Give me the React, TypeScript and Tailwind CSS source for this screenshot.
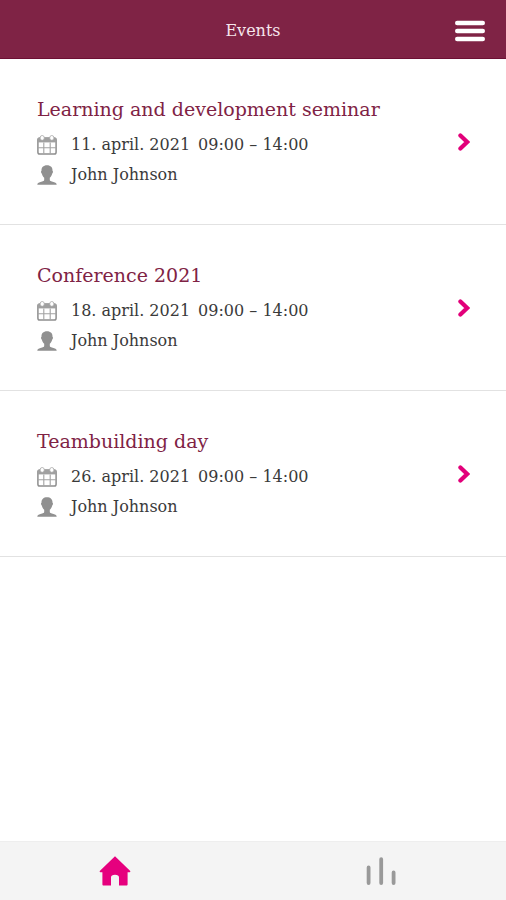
interface EventItem {
  title: string;
  date: string;
  time: string;
  host: string;
}

const events: EventItem[] = [
  {
    title: 'Learning and development seminar',
    date: '11. april. 2021',
    time: '09:00 – 14:00',
    host: 'John Johnson',
  },
  {
    title: 'Conference 2021',
    date: '18. april. 2021',
    time: '09:00 – 14:00',
    host: 'John Johnson',
  },
  {
    title: 'Teambuilding day',
    date: '26. april. 2021',
    time: '09:00 – 14:00',
    host: 'John Johnson',
  },
];

const MenuIcon = () => (
  <svg viewBox="0 0 30 22" className="h-[22px] w-[30px]" aria-hidden="true">
    <g stroke="#fff" strokeWidth="4.4" strokeLinecap="round">
      <path d="M2.2 3h25.6M2.2 11h25.6M2.2 19h25.6" />
    </g>
  </svg>
);

const CalendarIcon = () => (
  <svg viewBox="0 0 20 20" className="h-5 w-5 shrink-0" fill="none" aria-hidden="true">
    <rect x="0.9" y="3" width="18.2" height="16" rx="1.8" stroke="#8e8e8e" strokeWidth="1.5" />
    <path d="M1 3h18v4.4H1z" fill="#a0a0a0" />
    <path d="M1 12.7h18M6.8 7.5v11M13.2 7.5v11" stroke="#a3a3a3" strokeWidth="1.1" />
    <g fill="#fff" stroke="#a8a8a8" strokeWidth="0.8">
      <rect x="3.2" y="0.5" width="4" height="4.8" rx="2" />
      <rect x="12.8" y="0.5" width="4" height="4.8" rx="2" />
    </g>
  </svg>
);

const PersonIcon = () => (
  <svg viewBox="0 0 20 20" className="h-5 w-5 shrink-0" fill="#909090" aria-hidden="true">
    <path d="M10 .2C6.300 .2 4.300 2.400 4.500 5.800c-.8.2-.6 2.200.4 2.900.4 1.800 1.200 3.100 2.300 4v2.400c0 1-1.200 1.300-3.700 1.800C1.400 17.400.3 18 .3 19.800h19.400c0-1.800-1.100-2.400-3.200-2.900-2.500-.5-3.700-.8-3.700-1.800v-2.400c1.100-.9 1.900-2.200 2.300-4 1-.7 1.200-2.700.4-2.900C15.700 2.400 13.700.2 10 .2z" />
  </svg>
);

const ChevronIcon = () => (
  <svg viewBox="0 0 12 18" className="h-[18px] w-3 shrink-0" fill="none" aria-hidden="true">
    <path d="M2.4 2.4L9.2 9l-6.800 6.600" stroke="#e2007a" strokeWidth="4.2" strokeLinecap="round" />
  </svg>
);

const HomeIcon = () => (
  <svg viewBox="0 0 32 30" className="h-[30px] w-8" fill="#e6007e" aria-hidden="true">
    <path d="M16 .3L31 14.8c.6.7.4 1.4-.4 1.4h-2v12.100c0 .8-.4 1.200-1.200 1.200H20v-8c0-1.700-1.400-2.700-4-2.700s-4 1-4 2.700v8H4.600c-.8 0-1.200-.4-1.200-1.200V16.200h-2c-.8 0-1-.7-.4-1.400z" />
  </svg>
);

const StatsIcon = () => (
  <svg viewBox="0 0 32 30" className="h-[30px] w-8" fill="none" aria-hidden="true">
    <g stroke="#999" strokeWidth="3.8" strokeLinecap="round">
      <path d="M3.6 11.5V27M16.2 3.2V27M28.6 16.5V27" />
    </g>
  </svg>
);

const EventRow = ({ title, date, time, host }: EventItem) => {
  return (
    <li className="border-b border-[#e2e2e2]">
      <a href="#" className="flex items-center justify-between py-[34px] pr-9 pl-[37px]">
        <div>
          <h2 className="text-[19px] leading-8 text-[#7f2345]">{title}</h2>
          <div className="mt-[5px] text-base leading-[30px] text-[#3a3a3a]">
            <p className="flex items-center gap-[14px]">
              <CalendarIcon />
              <span className="flex gap-2">
                <span>{date}</span>
                <span>{time}</span>
              </span>
            </p>
            <p className="flex items-center gap-[14px]">
              <PersonIcon />
              <span>{host}</span>
            </p>
          </div>
        </div>
        <ChevronIcon />
      </a>
    </li>
  );
};

const App = () => {
  return (
    <div className="flex min-h-screen flex-col bg-white font-['DejaVu_Serif',serif]">
      <header className="grid h-[59px] grid-cols-[1fr_auto_1fr] items-center border-b border-[#6d1034] bg-[#7f2345] px-[21px] pt-[3px]">
        <h1 className="col-start-2 text-base text-[#f6e6ec]">Events</h1>
        <button type="button" aria-label="Menu" className="justify-self-end">
          <MenuIcon />
        </button>
      </header>
      <main className="flex-1">
        <ul>
          {events.map((event) => (
            <EventRow key={event.title} {...event} />
          ))}
        </ul>
      </main>
      <nav className="grid h-[59px] grid-cols-2 gap-9 border-t border-[#eee] bg-[#f4f4f4] pr-[10px]">
        <a href="#" aria-label="Home" className="flex items-center justify-center">
          <HomeIcon />
        </a>
        <a href="#" aria-label="Statistics" className="flex items-center justify-center">
          <StatsIcon />
        </a>
      </nav>
    </div>
  );
};

export default App;
